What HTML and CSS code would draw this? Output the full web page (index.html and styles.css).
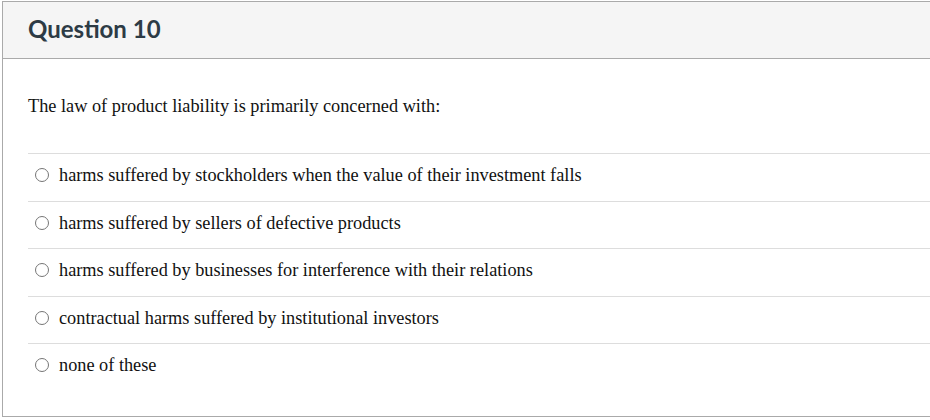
FILE: index.html
```html
<!DOCTYPE html>
<html>
<head>
<meta charset="utf-8">
<link rel="stylesheet" href="styles.css">
</head>
<body>
<div class="card">
  <div class="header"><h2 class="title">Question 10</h2></div>
  <div class="content">
    <p class="question">The law of product liability is primarily concerned with:</p>
    <div class="answers">
      <label class="answer"><span class="radio"></span><span class="text">harms suffered by stockholders when the value of their investment falls</span></label>
      <label class="answer"><span class="radio"></span><span class="text">harms suffered by sellers of defective products</span></label>
      <label class="answer"><span class="radio"></span><span class="text">harms suffered by businesses for interference with their relations</span></label>
      <label class="answer"><span class="radio"></span><span class="text">contractual harms suffered by institutional investors</span></label>
      <label class="answer"><span class="radio"></span><span class="text">none of these</span></label>
    </div>
  </div>
</div>
</body>
</html>
```
FILE: styles.css
```css
html, body {
  margin: 0;
  padding: 0;
  background: #fff;
  overflow: hidden;
}
body {
  padding: 1px 0 0 2px;
}
.card {
  width: 960px;
  height: 416px;
  border: 1px solid #aaaaaa;
  box-sizing: border-box;
}
.header {
  height: 57px;
  box-sizing: border-box;
  background: #f5f5f5;
  border-bottom: 1px solid #aaaaaa;
  display: flex;
  align-items: center;
  padding-left: 25px;
}
.title {
  margin: 0;
  font-family: Lato, "Noto Sans", sans-serif;
  font-weight: 700;
  font-size: 24px;
  color: #2d3b45;
  line-height: 1;
  padding-bottom: 2px;
}
.content {
  padding: 37px 0 0 25px;
  font-family: "Liberation Serif", "Times New Roman", serif;
  font-size: 18.3px;
  color: #111;
}
.question {
  margin: 0;
  line-height: 20px;
  height: 57px;
}
.answers {
  display: flex;
  flex-direction: column;
}
.answer {
  display: flex;
  align-items: center;
  height: 47.5px;
  box-sizing: border-box;
  border-top: 1px solid #dddddd;
  padding-left: 7px;
  padding-bottom: 4px;
}
.radio {
  width: 14px;
  height: 14px;
  box-sizing: border-box;
  border: 1.5px solid #767676;
  border-radius: 50%;
  margin-right: 10px;
  flex: none;
}
.text {
  line-height: 20px;
}
```
